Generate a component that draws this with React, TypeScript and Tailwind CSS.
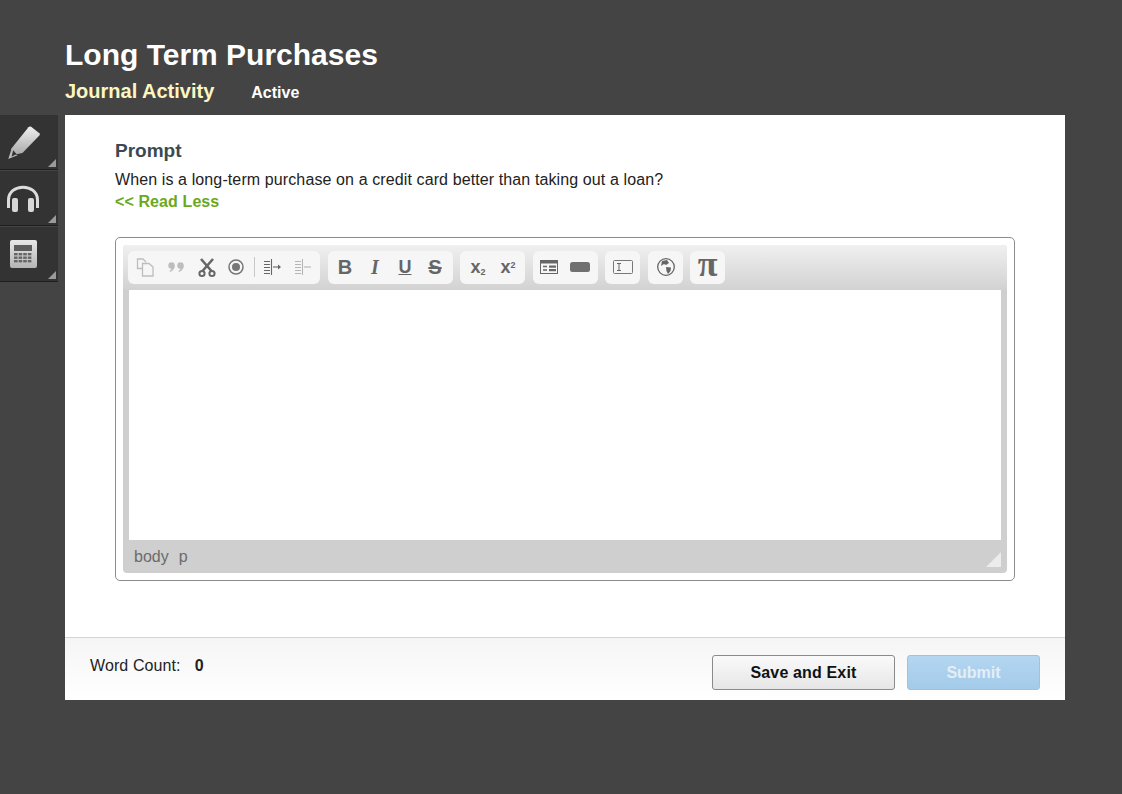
import React from "react";

const Tile = ({ children }: { children: React.ReactNode }) => (
  <div className="relative w-[58px] h-[56px] bg-[#333333] border-b border-b-[#1f1f1f] border-t border-t-[#444444] flex items-center pl-[5px]">
    {children}
    <div className="absolute right-[2px] bottom-[2px] w-0 h-0 border-l-[8px] border-l-transparent border-b-[8px] border-b-[#9a9a9a]" />
  </div>
);

const Group = ({ children, className }: { children: React.ReactNode; className: string }) => (
  <div className={`h-[33px] pb-px rounded-[6px] bg-[#f6f6f6] flex items-center ${className}`}>{children}</div>
);

const Ico = ({ children, w = 22, className = "" }: { children: React.ReactNode; w?: number; className?: string }) => (
  <svg width={w} height="22" viewBox={`0 0 ${w} 22`} className={`shrink-0 ${className}`}>{children}</svg>
);

export default function App() {
  return (
    <div className="w-[1122px] h-[794px] bg-[#444444] font-['Liberation_Sans',Arial,sans-serif] flex overflow-hidden">
      <div className="w-[65px] pt-[114px] shrink-0">
        <Tile>
          <svg width="36" height="36" viewBox="2 1 33 33">
            <defs>
              <linearGradient id="pg" x1="0" y1="0" x2="0" y2="1">
                <stop offset="0" stopColor="#efefef" />
                <stop offset="1" stopColor="#a8a8a8" />
              </linearGradient>
            </defs>
            <path d="M26 3.5 L33.5 9.5 Q34.3 10.5 33.5 11.5 L18 27.5 L9 29.5 L7.5 24 L23.5 4 Q24.5 3 26 3.5 Z" fill="url(#pg)" />
            <path d="M8 24 L5 33 L14 29.5 L9 29 Z" fill="#bdbdbd" />
            <path d="M9.5 25 L8 31 L12.5 28.5 Z" fill="#333" />
          </svg>
        </Tile>
        <Tile>
          <svg width="36" height="36" viewBox="0 0 36 36">
            <path d="M3.5 28 V20 C3.5 3 32.5 3 32.5 20 V28" fill="none" stroke="#dcdcdc" strokeWidth="3" />
            <rect x="7" y="18" width="6" height="14" rx="2" fill="#d8d8d8" />
            <rect x="23" y="18" width="6" height="14" rx="2" fill="#d8d8d8" />
          </svg>
        </Tile>
        <Tile>
          <svg width="36" height="36" viewBox="0 0 36 36">
            <defs>
              <linearGradient id="cg" x1="0" y1="0" x2="0" y2="1">
                <stop offset="0" stopColor="#e8e8e8" />
                <stop offset="1" stopColor="#b4b4b4" />
              </linearGradient>
            </defs>
            <rect x="5" y="4" width="27" height="28" rx="2" fill="url(#cg)" />
            <rect x="9" y="9" width="18" height="6" fill="#5c5c5c" />
            {[17, 20.5, 24].map((y) =>
              [9, 13.6, 18.2, 22.8].map((x) => <rect key={`${x}-${y}`} x={x} y={y} width="3.6" height="2.4" fill="#666" />)
            )}
          </svg>
        </Tile>
      </div>

      <div className="w-[1000px] shrink-0 flex flex-col h-[700px]">
        <div className="h-[115px] shrink-0 flex flex-col">
          <h1 className="mt-[38px] text-[30px] leading-[34px] font-bold text-white">Long Term Purchases</h1>
          <div className="mt-[5px] flex items-baseline">
            <span className="text-[20px] leading-[28px] font-bold text-[#fdf6c0]">Journal Activity</span>
            <span className="ml-[37px] text-[16px] font-bold text-white">Active</span>
          </div>
        </div>

        <div className="h-[522px] bg-white px-[50px] pt-[24px] flex flex-col">
          <div className="text-[19px] leading-[23px] font-bold text-[#3a4a52]">Prompt</div>
          <div className="mt-[7px] text-[16px] leading-[22px] tracking-[0.11px] text-[#222222]">When is a long-term purchase on a credit card better than taking out a loan?</div>
          <div className="text-[16px] leading-[22px] tracking-[0.1px] font-bold text-[#69a820]">&lt;&lt; Read Less</div>

          <div className="mt-[24px] h-[344px] w-[900px] border border-[#8c8c8c] rounded-[5px] p-[7px]">
            <div className="h-full rounded-[4px] bg-[#cfcfcf] flex flex-col">
              <div className="h-[45px] shrink-0 rounded-t-[4px] bg-gradient-to-b from-[#f0f0f0] to-[#d2d2d2] pl-[5px] pt-[6px] flex gap-[7px]">
                <Group className="w-[192px] pl-[6px] gap-[9px]">
                  <Ico>
                    <g fill="none" stroke="#bdbdbd" strokeWidth="1.3">
                      <path d="M8 12.5 H3.5 V3 H9 L12 6" />
                      <path d="M8.5 7.5 H15 L19 11 V20 H8.5 Z" />
                    </g>
                  </Ico>
                  <Ico>
                    <g fill="#bdbdbd">
                      <circle cx="6.5" cy="9.5" r="3.2" />
                      <path d="M9.7 9.5 C9.7 12.5 8 15 5 16 L4.5 15 C6 14 6.8 12.8 6.8 11.5 Z" />
                      <circle cx="15.5" cy="9.5" r="3.2" />
                      <path d="M18.7 9.5 C18.7 12.5 17 15 14 16 L13.5 15 C15 14 15.8 12.8 15.8 11.5 Z" />
                    </g>
                  </Ico>
                  <Ico>
                    <g stroke="#666" strokeWidth="2.6" fill="none">
                      <path d="M5 3 L15.5 15" />
                      <path d="M17 3 L6.5 15" />
                      <circle cx="6" cy="17.5" r="2.6" strokeWidth="2" />
                      <circle cx="16" cy="17.5" r="2.6" strokeWidth="2" />
                    </g>
                  </Ico>
                  <Ico className="-ml-[2px]">
                    <circle cx="11" cy="11" r="7" fill="none" stroke="#777" strokeWidth="1.5" />
                    <circle cx="11" cy="11" r="4" fill="#777" />
                  </Ico>
                  <div className="w-px h-[20px] bg-[#c8c8c8] -ml-[2px]" />
                  <Ico className="-ml-[3px]">
                    <g stroke="#666" strokeWidth="1.1" fill="none">
                      <path d="M10.5 3 V19" />
                      <path d="M3 5.5 H9 M3 8.5 H9 M3 11.5 H9 M3 14.5 H9 M3 17.5 H9" />
                      <path d="M12 11 H18" />
                    </g>
                    <path d="M17 8.5 L20 11 L17 13.5 Z" fill="#666" />
                  </Ico>
                  <Ico>
                    <g stroke="#b5b5b5" strokeWidth="1.1" fill="none">
                      <path d="M10.5 3 V19" />
                      <path d="M3 5.5 H9 M3 8.5 H9 M3 11.5 H9 M3 14.5 H9 M3 17.5 H9" />
                      <path d="M12 11 H19" />
                    </g>
                  </Ico>
                </Group>
                <Group className="ml-px w-[125px] pl-[6px] gap-[8px]">
                  <span className="w-[22px] text-center text-[20px] font-bold text-[#666]">B</span>
                  <span className="w-[22px] text-center text-[20px] font-bold italic font-['Liberation_Serif',serif] text-[#666]">I</span>
                  <span className="w-[22px] text-center text-[18px] leading-[20px] font-bold underline text-[#666]">U</span>
                  <span className="w-[22px] text-center text-[20px] font-bold line-through text-[#666]">S</span>
                </Group>
                <Group className="w-[65px] pl-[7px] gap-[8px]">
                  <span className="w-[22px] text-center text-[18px] font-bold text-[#666]">x<sub className="text-[9px]">2</sub></span>
                  <span className="w-[22px] text-center text-[18px] font-bold text-[#666]">x<sup className="text-[9px]">2</sup></span>
                </Group>
                <Group className="ml-px w-[65px] pl-[5px] gap-[9px]">
                  <Ico>
                    <rect x="2.5" y="4.5" width="17" height="13" fill="#f6f6f6" stroke="#666" />
                    <rect x="2.5" y="4.5" width="17" height="3" fill="#666" />
                    <path d="M5 10.5 H9 M5 14 H9" stroke="#666" strokeWidth="1.6" />
                    <rect x="11" y="9.5" width="7" height="2.2" fill="#666" />
                    <rect x="11" y="13" width="7" height="2.2" fill="#666" />
                  </Ico>
                  <Ico>
                    <rect x="1" y="6" width="20" height="10" rx="2.5" fill="#707070" />
                  </Ico>
                </Group>
                <Group className="w-[35px] justify-center">
                  <Ico>
                    <rect x="1.5" y="4.5" width="19" height="13" rx="1" fill="none" stroke="#777" />
                    <path d="M5 7.5 H9 M7 7.5 V14.5 M5 14.5 H9" stroke="#666" fill="none" />
                  </Ico>
                </Group>
                <Group className="ml-px w-[35px] justify-center">
                  <Ico>
                    <circle cx="11" cy="11" r="8.3" fill="none" stroke="#666" strokeWidth="1.3" />
                    <path d="M7 5 L12 4 L14 7 L11 9 L9 8 L6 10 Z M11 11 L16 11.5 L15.5 15 L13 18 L11.5 15 Z" fill="#666" />
                  </Ico>
                </Group>
                <Group className="w-[35px] justify-center">
                  <span className="-mt-[6px] text-[36px] leading-[30px] font-bold font-['Liberation_Serif',serif] text-[#666]">π</span>
                </Group>
              </div>
              <div className="h-[250px] shrink-0 mx-[6px] bg-white" />
              <div className="relative flex-1 flex items-center pl-[11px] text-[16px] text-[#6b6b6b]">
                <span>body</span>
                <span className="ml-[10px]">p</span>
                <div className="absolute right-[6px] bottom-[6px] w-0 h-0 border-l-[15px] border-l-transparent border-b-[15px] border-b-[#ececec]" />
              </div>
            </div>
          </div>
        </div>

        <div className="h-[63px] shrink-0 border-t border-t-[#d4d4d4] bg-gradient-to-b from-[#f5f5f5] to-white pl-[25px] pr-[25px] flex">
          <div className="pt-[18px] flex text-[16px] leading-[20px] tracking-[0.1px] text-[#222222]">
            <span>Word Count:</span>
            <span className="ml-[14px] font-bold">0</span>
          </div>
          <div className="ml-auto pt-[17px] flex gap-[12px]">
            <button className="w-[183px] h-[35px] pt-px rounded-[3px] border border-[#8a8a8a] bg-gradient-to-b from-[#fafafa] to-[#e6e6e6] text-[16px] font-bold tracking-[0.15px] text-[#111111]">Save and Exit</button>
            <button className="w-[133px] h-[35px] pt-px rounded-[3px] border border-[#9cc3e0] bg-gradient-to-b from-[#b4d6f1] to-[#a3cbe9] text-[16px] font-bold text-[#e4eef5]">Submit</button>
          </div>
        </div>
      </div>
    </div>
  );
}
